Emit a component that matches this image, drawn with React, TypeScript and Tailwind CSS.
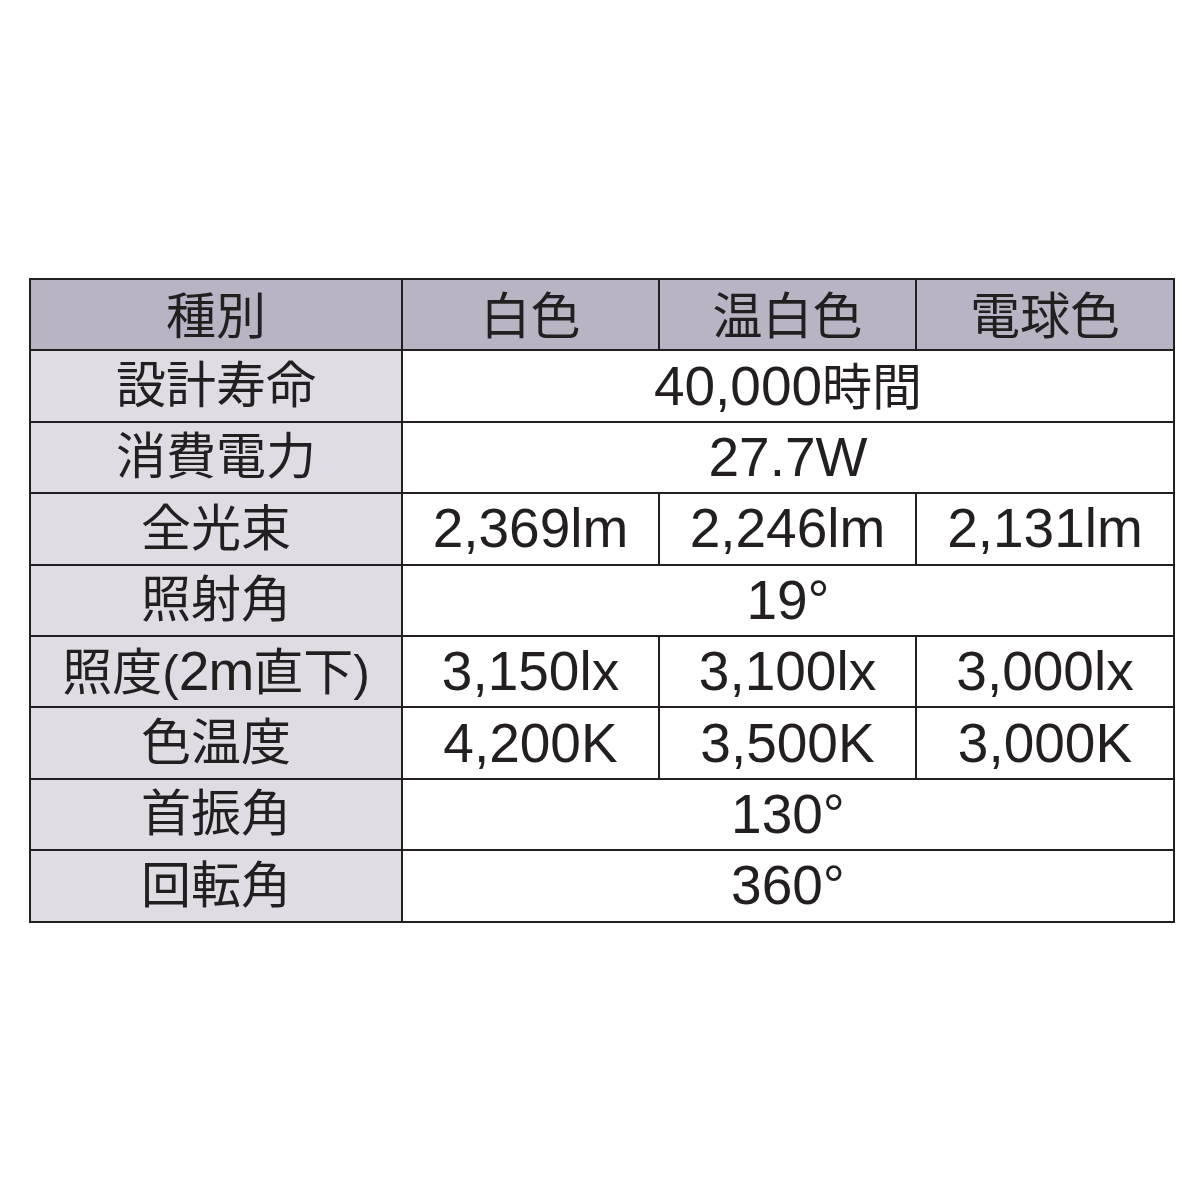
import type { ReactNode } from "react"

const cjk = "text-[50px]"
const num = "text-[55px]"

const rows: { label: ReactNode; values: ReactNode[] }[] = [
  { label: "設計寿命", values: [<>40,000<span className={cjk}>時間</span></>] },
  { label: "消費電力", values: ["27.7W"] },
  { label: "全光束", values: ["2,369lm", "2,246lm", "2,131lm"] },
  { label: "照射角", values: ["19°"] },
  {
    label: (
      <>
        照度(<span className={`${num} tracking-[-1px]`}>2m</span>直下)
      </>
    ),
    values: ["3,150lx", "3,100lx", "3,000lx"],
  },
  { label: "色温度", values: ["4,200K", "3,500K", "3,000K"] },
  { label: "首振角", values: ["130°"] },
  { label: "回転角", values: ["360°"] },
]

const cell = "border-2 border-[#231f20] h-[71.4px] p-0 text-center align-middle whitespace-nowrap"

export default function App() {
  return (
    <div
      className="w-[1200px] h-[1200px] bg-white pt-[278px] pl-[29px] text-[#231f20]"
      style={{ fontFamily: '"Liberation Sans", "Noto Sans CJK JP", sans-serif' }}
    >
      <table className="table-fixed border-collapse w-[1144px] leading-none">
        <colgroup>
          <col className="w-[372px]" />
          <col className="w-[257px]" />
          <col className="w-[257px]" />
          <col className="w-[258px]" />
        </colgroup>
        <thead>
          <tr className="bg-[#b9b4c3]">
            {["種別", "白色", "温白色", "電球色"].map((h) => (
              <th key={h} className={`${cell} ${cjk} font-normal pt-[4px]`}>
                {h}
              </th>
            ))}
          </tr>
        </thead>
        <tbody>
          {rows.map((r, ri) => (
            <tr key={ri}>
              <td className={`${cell} ${cjk} bg-[#dfdce4]`}>{r.label}</td>
              {r.values.length === 1 ? (
                <td colSpan={3} className={`${cell} ${num}`}>
                  {r.values[0]}
                </td>
              ) : (
                r.values.map((v, i) => (
                  <td key={i} className={`${cell} ${num}`}>
                    {v}
                  </td>
                ))
              )}
            </tr>
          ))}
        </tbody>
      </table>
    </div>
  )
}
